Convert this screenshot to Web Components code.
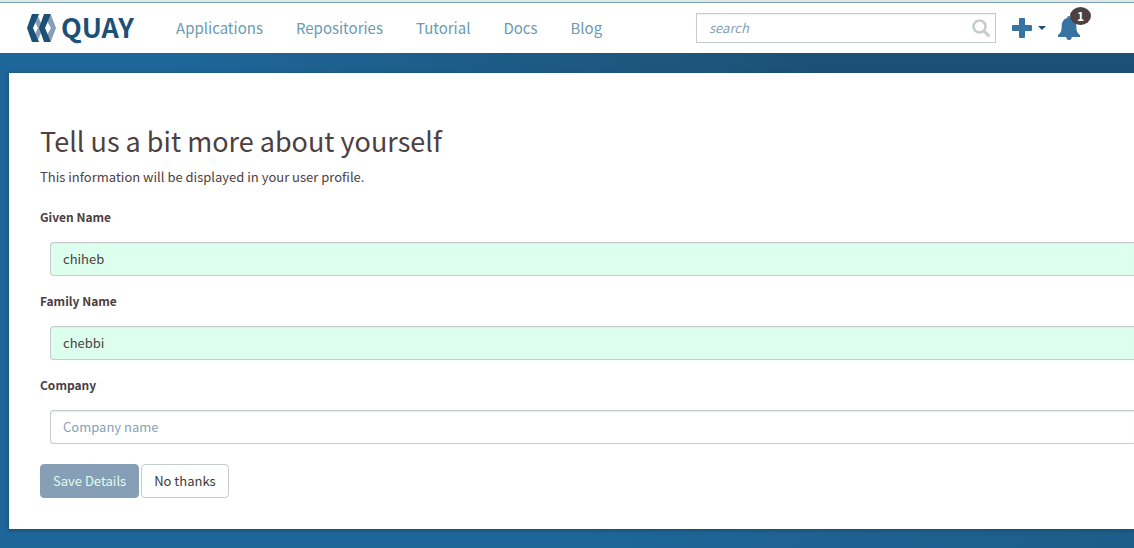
<!DOCTYPE html>
<html lang="en">
<head>
<meta charset="utf-8">
<title>Quay</title>
<style>
html { height: 100%; }
body {
  margin: 0; min-height: 100%; overflow-x: hidden;
  font: 13px/20px "Noto Sans CJK SC", "Noto Sans", sans-serif; color: #4d4040;
  background: #1e6699;
}
</style>
</head>
<body>
<quay-app></quay-app>
<script>
const define = (name, html, setup) => customElements.define(name, class extends HTMLElement {
  constructor() {
    super();
    const template = document.createElement('template');
    template.innerHTML = html;
    this.attachShadow({ mode: 'open' }).append(template.content.cloneNode(true));
    if (setup) setup(this, this.shadowRoot);
  }
});

define('quay-logo', `
<style>
:host { display: block; }
a { display: flex; align-items: center; gap: 4px; color: #1c5074; text-decoration: none; font-size: 27px; font-weight: 700; line-height: 32px; }
span { padding-bottom: 3px; }
svg { display: block; }
</style>
<a href="#"><svg width="30" height="28" viewBox="0 0 30 28" aria-hidden="true">
<path fill="#869fb6" d="M11 2l5 12-5 12-3-6 3-6-3-6zM24 1l5 13-5 13-4-6 4-7-4-7z"/>
<path fill="#1c5074" d="M5 0h7L6 14l6 14H5L0 14zM17 0h7l-6 14 6 14h-7l-5-14z"/>
</svg><span>QUAY</span></a>`);

define('nav-link', `
<style>
:host { display: block; }
a { color: #6a9bb0; text-decoration: none; font-size: 15px; line-height: 24px; }
</style>
<a href="#"><slot></slot></a>`);

define('search-box', `
<style>
:host { display: block; width: 300px; }
label { display: flex; align-items: center; box-sizing: border-box; height: 30px; border: 1px solid #c5cccc; padding: 0 5px 0 12px; box-shadow: inset 0 1px 1px #eef2f2; }
input { flex: 1; min-width: 0; border: 0; padding: 0; outline: 0; background: none; font: italic 13px/20px "Noto Sans CJK SC", sans-serif; color: #4d4040; }
input::placeholder { color: #869fb6; opacity: 1; }
svg { display: block; }
</style>
<label><input type="text" placeholder="search" aria-label="search">
<svg width="18" height="18" viewBox="0 0 18 18" fill="none" stroke="#c5cccc" aria-hidden="true"><circle cx="7.500" cy="7.500" r="6" stroke-width="2.500"/><path d="M12 12l4.500 4.500" stroke-width="3" stroke-linecap="round"/></svg></label>`);

define('header-actions', `
<style>
:host { display: flex; align-items: center; gap: 12px; }
button { display: flex; align-items: center; gap: 6px; position: relative; border: 0; background: none; padding: 0; font: inherit; color: #35709c; }
svg { display: block; }
.badge { position: absolute; left: 12px; top: -9px; width: 21px; height: 18px; border-radius: 50%; background: #4d4040; color: #fff; font-size: 12px; font-weight: 700; line-height: 18px; text-align: center; }
</style>
<button aria-label="Create new"><svg width="20" height="20" viewBox="0 0 20 20" fill="#3874a2"><path d="M8 0h4q1 0 1 1v6h6q1 0 1 1v4q0 1-1 1h-6v6q0 1-1 1H8q-1 0-1-1v-6H1q-1 0-1-1V8q0-1 1-1h6V1q0-1 1-1z"/></svg>
<svg width="8" height="4" viewBox="0 0 8 4"><path fill="#1c5074" d="M0 0h8L4 4z"/></svg></button>
<button aria-label="Notifications"><svg width="22" height="24" viewBox="0 0 24 24" preserveAspectRatio="none"><path fill="#3874a2" d="M12 0q2 0 2 2c4 1 6 4 6 8 0 5 1 7 4 9v2H15q0 3-3 3t-3-3H0v-2c3-2 4-4 4-9 0-4 2-7 6-8q0-2 2-2z"/></svg><span class="badge">1</span></button>`);

define('site-header', `
<style>
:host { display: block; background: #fff; border-top: 2px solid #dde8e8; }
header { display: flex; align-items: center; height: 50px; border-top: 1px solid #7f9fbb; padding: 0 54px 0 27px; }
nav { display: flex; gap: 33px; padding-left: 42px; }
search-box { margin-left: auto; }
header-actions { margin-left: 16px; }
</style>
<header><quay-logo></quay-logo>
<nav><nav-link>Applications</nav-link><nav-link>Repositories</nav-link><nav-link>Tutorial</nav-link><nav-link>Docs</nav-link><nav-link>Blog</nav-link></nav>
<search-box></search-box><header-actions></header-actions></header>`);

define('form-field', `
<style>
:host { display: block; }
label { display: block; font-size: 12px; font-weight: 700; line-height: 20px; }
input { display: block; box-sizing: border-box; width: calc(100% - 10px); height: 34px; margin: 15px 0 0 10px; padding: 0 12px 2px; border: 1px solid #c5cccc; border-right: 0; border-radius: 4px 0 0 4px; outline: 0; background: #fff; box-shadow: inset 0 1px 1px #e6ecec; color: #4d4040; font: 13px/20px "Noto Sans CJK SC", sans-serif; }
input.filled { background: #dfe; }
input::placeholder { color: #869fb6; opacity: 1; }
</style>
<label for="field"></label><input id="field" type="text">`, (host, root) => {
  const input = root.querySelector('input');
  root.querySelector('label').textContent = host.getAttribute('label');
  input.placeholder = host.getAttribute('placeholder') || '';
  input.value = host.getAttribute('value') || '';
  input.classList.toggle('filled', input.value !== '');
});

define('action-button', `
<style>
:host { display: block; }
button { display: block; height: 34px; padding: 0 12px; border: 1px solid #c5cccc; border-radius: 4px; background: #fff; color: #403838; font: 13px/20px "Noto Sans CJK SC", sans-serif; }
:host([primary]) button { background: #869fb6; border-color: #869fb6; color: #e2fbef; }
</style>
<button type="button"><slot></slot></button>`);

define('profile-card', `
<style>
:host { display: block; background: #fff; box-shadow: 0 1px 3px 1px #1c5074; padding: 51px 0 31px 31px; }
h1 { margin: 0; font-size: 27px; line-height: 34px; font-weight: 400; }
p { margin: 9px 0 20px; }
form { display: grid; gap: 15px; }
.actions { display: flex; gap: 2px; margin-top: 5px; }
</style>
<h1>Tell us a bit more about yourself</h1>
<p>This information will be displayed in your user profile.</p>
<form>
<form-field label="Given Name" value="chiheb"></form-field>
<form-field label="Family Name" value="chebbi"></form-field>
<form-field label="Company" placeholder="Company name"></form-field>
<div class="actions"><action-button primary>Save Details</action-button><action-button>No thanks</action-button></div>
</form>`);

define('quay-app', `
<style>
:host { display: block; }
main { padding: 20px 0 19px 9px; background: linear-gradient(90deg, #1e6699 15%, #1c5074 75%) top / 100% 20px no-repeat, linear-gradient(90deg, #1e6699 50%, #1d5d89) #1e6699; }
</style>
<site-header></site-header>
<main><profile-card></profile-card></main>`);
</script>
</body>
</html>
